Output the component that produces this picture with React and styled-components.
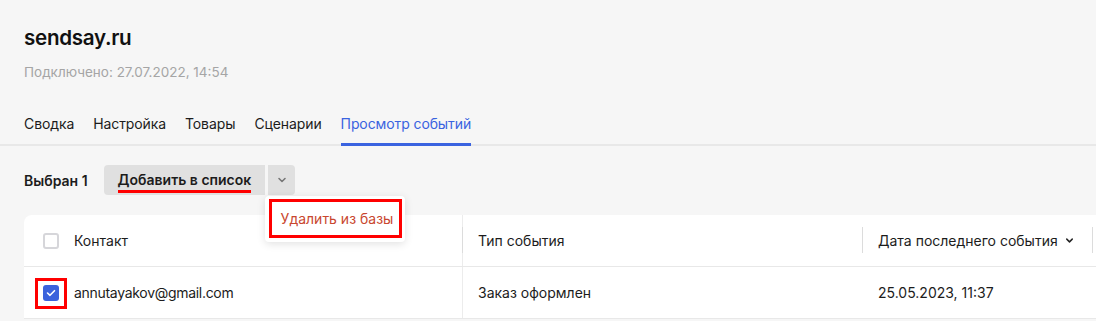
import React from 'react';
import styled, { createGlobalStyle } from 'styled-components';

const GlobalStyle = createGlobalStyle`
  html, body {
    margin: 0;
    padding: 0;
    background: #f6f6f6;
  }
  body {
    font-family: Inter, "Noto Sans", "Liberation Sans", sans-serif;
    color: #1c1c1c;
    -webkit-font-smoothing: antialiased;
  }
  #root {
    width: 1096px;
    height: 321px;
    overflow: hidden;
  }
`;

const tabs = ['Сводка', 'Настройка', 'Товары', 'Сценарии', 'Просмотр событий'];

const ChevronDown = ({ size = 12, color = '#777' }) => (
  <svg width={size} height={size} viewBox="0 0 12 12" fill="none">
    <path d="M3 4.5L6 7.5L9 4.5" stroke={color} strokeWidth="1.6" strokeLinecap="round" strokeLinejoin="round" />
  </svg>
);

const App = () => {
  return (
    <Page>
      <GlobalStyle />
      <Header>
        <Title>sendsay.ru</Title>
        <Subtitle>Подключено: 27.07.2022, 14:54</Subtitle>
      </Header>

      <TabBar>
        {tabs.map((t, i) => (
          <Tab key={t} $active={i === tabs.length - 1}>{t}</Tab>
        ))}
      </TabBar>

      <Toolbar>
        <Selected>Выбран 1</Selected>
        <SplitButton>
          <MainButton>
            <Underlined>Добавить в список</Underlined>
          </MainButton>
          <ArrowButton>
            <ChevronDown />
          </ArrowButton>
          <Menu>
            <MenuItem>Удалить из базы</MenuItem>
          </Menu>
        </SplitButton>
      </Toolbar>

      <Table>
        <Row>
          <Cell $w={439} $first>
            <CheckWrap>
              <Checkbox />
            </CheckWrap>
            Контакт
          </Cell>
          <Cell $w={400} $divider>Тип события</Cell>
          <Cell $w={230} $divider>
            Дата последнего события
            <SortIcon><ChevronDown size={11} color="#222" /></SortIcon>
          </Cell>
          <Cell $w={200} $divider />
        </Row>
        <Row>
          <Cell $w={439} $first>
            <CheckWrap $marked>
              <Checkbox $checked>
                <svg width="10" height="8" viewBox="0 0 10 8" fill="none">
                  <path d="M1.5 4L4 6.3L8.5 1.7" stroke="#fff" strokeWidth="1.6" strokeLinecap="round" strokeLinejoin="round" />
                </svg>
              </Checkbox>
            </CheckWrap>
            <Email>annutayakov@gmail.com</Email>
          </Cell>
          <Cell $w={400}>Заказ оформлен</Cell>
          <Cell $w={230}>25.05.2023, 11:37</Cell>
          <Cell $w={200} />
        </Row>
      </Table>
    </Page>
  );
};

const Page = styled.div`
  padding-top: 24px;
`;

const Header = styled.div`
  padding: 0 24px;
`;

const Title = styled.h1`
  margin: 0;
  font-size: 20.6px;
  line-height: 28px;
  font-weight: 600;
  letter-spacing: -0.3px;
  color: #111;
`;

const Subtitle = styled.div`
  margin-top: 10px;
  font-size: 13.5px;
  line-height: 20px;
  color: #a5a5a5;
`;

const TabBar = styled.div`
  margin-top: 32px;
  display: flex;
  gap: 19px;
  padding: 0 24px;
  box-shadow: inset 0 -2px 0 #e8e8e8;
`;

const Tab = styled.div`
  font-size: 14px;
  line-height: 20px;
  letter-spacing: -0.1px;
  padding-bottom: 9px;
  border-bottom: 3px solid ${p => (p.$active ? '#3a63e0' : 'transparent')};
  color: ${p => (p.$active ? '#3a63e0' : '#1c1c1c')};
`;

const Toolbar = styled.div`
  margin-top: 19px;
  padding: 0 24px;
  display: flex;
  align-items: center;
  gap: 16px;
  height: 30px;
`;

const Selected = styled.div`
  font-size: 14px;
  font-weight: 600;
  color: #1c1c1c;
`;

const SplitButton = styled.div`
  position: relative;
  display: flex;
  gap: 3px;
`;

const MainButton = styled.div`
  height: 30px;
  padding: 0 14px;
  display: flex;
  align-items: center;
  background: #e0e0e0;
  border-radius: 4px 0 0 4px;
  font-size: 14px;
  font-weight: 600;
  color: #1c1c1c;
  box-sizing: border-box;
`;

const Underlined = styled.span`
  display: inline-block;
  line-height: 20px;
  padding-top: 3px;
  border-bottom: 3px solid #ff0000;
`;

const ArrowButton = styled.div`
  width: 27px;
  height: 30px;
  display: flex;
  align-items: center;
  justify-content: center;
  background: #e0e0e0;
  border-radius: 0 4px 4px 0;
`;

const Menu = styled.div`
  position: absolute;
  top: 31px;
  left: 161px;
  width: 140px;
  height: 46px;
  padding: 3px 3px 4px 4px;
  box-sizing: border-box;
  background: #fff;
  border-radius: 4px;
  box-shadow: 0 2px 8px rgba(0, 0, 0, 0.12);
  z-index: 5;
`;

const MenuItem = styled.div`
  height: 100%;
  border: 3px solid #ff0000;
  box-sizing: border-box;
  display: flex;
  align-items: center;
  padding-left: 9px;
  font-size: 14px;
  color: #c9472f;
`;

const Table = styled.div`
  margin-top: 20px;
  margin-left: 24px;
  width: 1300px;
  background: #fff;
  border-radius: 8px 0 0 0;
`;

const Row = styled.div`
  display: flex;
  height: 52px;
  border-bottom: 1px solid #e8e8e8;
  box-sizing: border-box;
`;

const Cell = styled.div`
  position: relative;
  flex: 0 0 ${p => p.$w}px;
  display: flex;
  align-items: center;
  padding-left: ${p => (p.$first ? '19px' : '15px')};
  box-sizing: border-box;
  font-size: 14px;
  color: #1c1c1c;
  border-right: ${p => (p.$first ? '1px solid #ececec' : 'none')};

  ${p => p.$divider && `
    &::before {
      content: '';
      position: absolute;
      left: -1px;
      top: 12px;
      bottom: 13px;
      width: 1px;
      background: #dcdcdc;
    }
  `}
`;

const Email = styled.span`
  letter-spacing: -0.3px;
`;

const CheckWrap = styled.div`
  position: relative;
  width: 16px;
  height: 16px;
  margin-right: 15px;

  ${p => p.$marked && `
    &::after {
      content: '';
      position: absolute;
      left: -8px;
      top: -7px;
      width: 32px;
      height: 31px;
      border: 3px solid #ff0000;
      box-sizing: border-box;
    }
  `}
`;

const Checkbox = styled.div`
  width: 16px;
  height: 16px;
  box-sizing: border-box;
  border-radius: 3px;
  border: ${p => (p.$checked ? 'none' : '2px solid #d6d6da')};
  background: ${p => (p.$checked ? '#3b62dc' : '#fff')};
  display: flex;
  align-items: center;
  justify-content: center;
`;

const SortIcon = styled.span`
  display: inline-flex;
  margin-left: 6px;
`;

export default App;
